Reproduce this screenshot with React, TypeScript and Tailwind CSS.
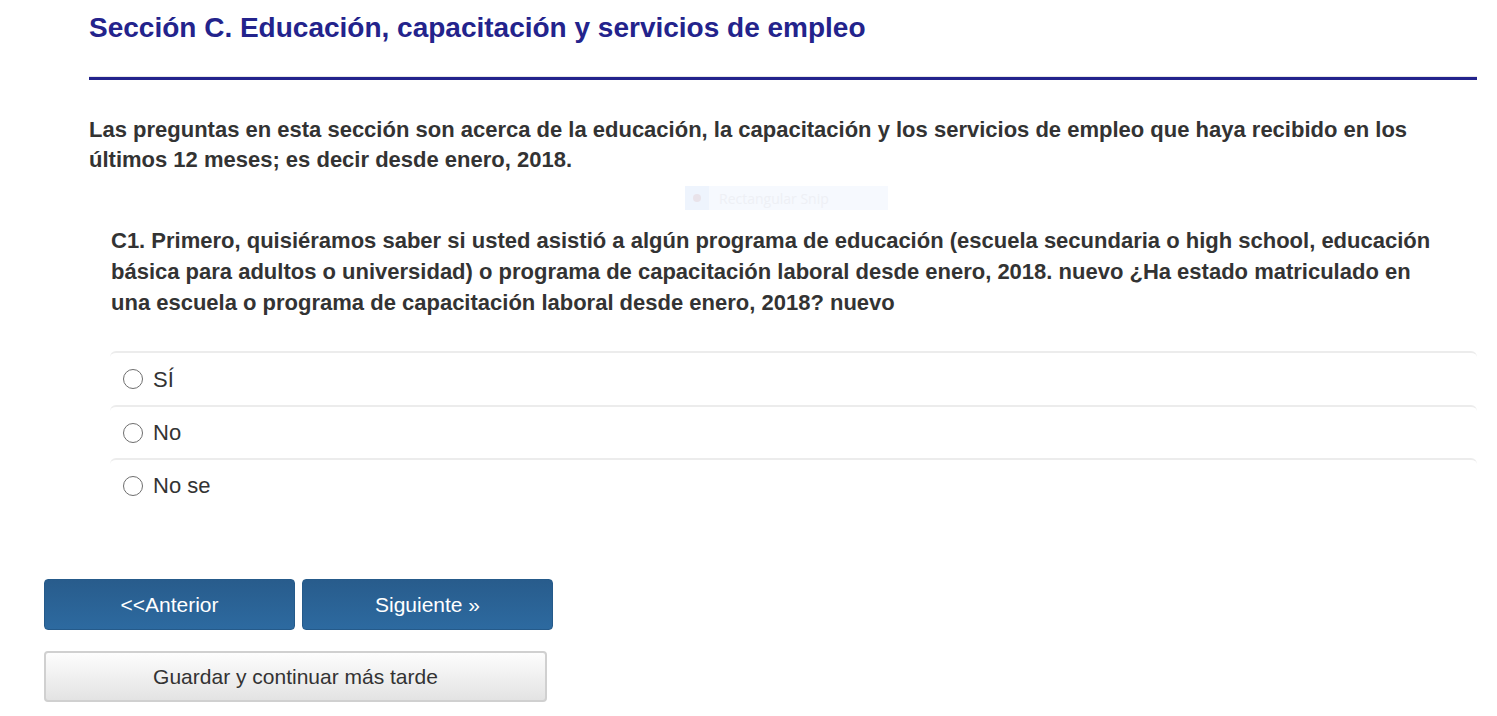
const options = ['SÍ', 'No', 'No se']

export default function App() {
    return (
        <div className="relative min-h-[716px] bg-white text-[#333333]" style={{ fontFamily: '"Liberation Sans", Arial, sans-serif' }}>
            <div className="ml-[89px] mr-[20px] pt-[11px]">
                <h1 className="text-[28px] leading-[34px] font-bold text-[#23238c]">
                    Sección C. Educación, capacitación y servicios de empleo
                </h1>
                <div className="mt-[31px] border-t-[1px] border-[#e8e8e8]"></div>
                <div className="h-[3px] bg-[#23238c]"></div>
                <p className="mt-[35px] text-[22px] leading-[30px] font-bold">
                    Las preguntas en esta sección son acerca de la educación, la capacitación y los servicios de empleo que haya recibido en los últimos 12 meses; es decir desde enero, 2018.
                </p>
            </div>
            <div className="ml-[110px] mr-[20px] mt-[50px]">
                <p className="pl-[1px] pr-[37px] text-[22px] leading-[31px] font-bold">
                    C1. Primero, quisiéramos saber si usted asistió a algún programa de educación (escuela secundaria o high school, educación básica para adultos o universidad) o programa de capacitación laboral desde enero, 2018. nuevo ¿Ha estado matriculado en una escuela o programa de capacitación laboral desde enero, 2018? nuevo
                </p>
                <div className="mt-[33px]">
                    {options.map((o, i) => (
                        <label key={o} className={`flex items-center ${i === 0 ? 'h-[54px]' : 'h-[53px]'} border-t-2 border-[#ececec] rounded-t-[6px] pl-[13px]`}>
                            <span className="w-[20px] h-[20px] rounded-full border-[1.5px] border-[#6e6e6e] bg-white"></span>
                            <span className="ml-[10px] text-[22px]">{o}</span>
                        </label>
                    ))}
                </div>
            </div>
            <div className="ml-[44px] mt-[68px] flex gap-[7px]">
                <button className="w-[251px] h-[51px] rounded-[4px] bg-gradient-to-b from-[#285c8c] to-[#2d6aa0] border border-[#255a8a] text-white text-[21px]">
                    &lt;&lt;Anterior
                </button>
                <button className="w-[251px] h-[51px] rounded-[4px] bg-gradient-to-b from-[#285c8c] to-[#2d6aa0] border border-[#255a8a] text-white text-[21px]">
                    Siguiente »
                </button>
            </div>
            <div className="ml-[44px] mt-[21px]">
                <button className="w-[503px] h-[51px] rounded-[4px] bg-gradient-to-b from-[#fdfdfd] to-[#e3e3e3] border-2 border-[#d0d0d0] text-[#333333] text-[21px]">
                    Guardar y continuar más tarde
                </button>
            </div>
            <div className="absolute left-[685px] top-[186px] w-[203px] h-[24px] bg-[#f6f9fe] flex items-center">
                <span className="w-[24px] h-[24px] bg-[#eef4fd] flex items-center justify-center">
                    <span className="w-[8px] h-[8px] rounded-full bg-[#e9e3ea]"></span>
                </span>
                <span className="ml-[10px] text-[14px] text-[#eef0f5]" style={{ fontFamily: '"Open Sans", sans-serif' }}>Rectangular Snip</span>
            </div>
        </div>
    )
}
